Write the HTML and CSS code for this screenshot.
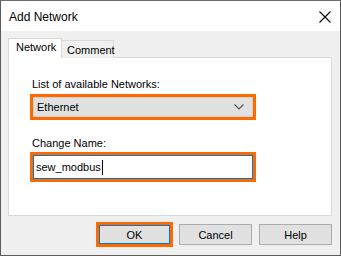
FILE: index.html
```html
<!DOCTYPE html>
<html>
<head>
<meta charset="utf-8">
<link rel="stylesheet" href="styles.css">
</head>
<body>
<div class="window">
  <div class="titlebar">
    <span class="title">Add Network</span>
    <svg class="close" width="12" height="12" viewBox="0 0 12 12"><path d="M0.5 0.5 L11.5 11.5 M11.5 0.5 L0.5 11.5" stroke="#000" stroke-width="1.1" fill="none"/></svg>
  </div>
  <div class="body">
    <div class="tabs">
      <div class="tab active">Network</div>
      <div class="tab">Comment</div>
    </div>
    <div class="panel">
      <div class="label">List of available Networks:</div>
      <div class="hl hl-select">
        <div class="select">
          <span>Ethernet</span>
          <svg width="10" height="6" viewBox="0 0 10 6"><path d="M0.5 0.5 L5 5 L9.5 0.5" stroke="#555" stroke-width="1.2" fill="none"/></svg>
        </div>
      </div>
      <div class="label label2">Change Name:</div>
      <div class="hl hl-input">
        <div class="input"><span>sew_modbus</span><span class="caret"></span></div>
      </div>
    </div>
    <div class="buttons">
      <div class="hl hl-btn"><div class="btn default">OK</div></div>
      <div class="btn">Cancel</div>
      <div class="btn">Help</div>
    </div>
  </div>
</div>
</body>
</html>
```

FILE: styles.css
```css
html, body {
  margin: 0;
  padding: 0;
}
body {
  width: 341px;
  height: 256px;
  overflow: hidden;
  font-family: "Liberation Sans", Arial, sans-serif;
  font-size: 11px;
  color: #000;
}
.window {
  box-sizing: border-box;
  width: 341px;
  height: 256px;
  border: 1px solid #5c5c5c;
  border-top-color: #6e6e6e;
  background: #f0f0f0;
  display: flex;
  flex-direction: column;
}
.titlebar {
  height: 30px;
  background: #fff;
  display: flex;
  align-items: center;
  justify-content: space-between;
  padding: 0 9px 0 8px;
  flex: none;
}
.title {
  font-size: 12px;
  position: relative;
  top: 1px;
}
.close {
  display: block;
  margin-top: 1px;
}
.body {
  padding: 7px 8px 0 7px;
  display: flex;
  flex-direction: column;
}
.tabs {
  display: flex;
  align-items: flex-end;
  height: 20px;
  position: relative;
  z-index: 1;
  margin-bottom: -1px;
}
.tab {
  box-sizing: border-box;
  height: 18px;
  padding: 0 4px 0 5px;
  border: 1px solid #d9d9d9;
  border-bottom: none;
  background: #f0f0f0;
  line-height: 18px;
}
.tab.active {
  height: 20px;
  width: 54px;
  background: #fff;
  padding: 0 0 0 7px;
  line-height: 17px;
}
.tab + .tab {
  border-left: none;
  width: 52px;
  padding: 0 0 0 5px;
}
.panel {
  box-sizing: border-box;
  height: 159px;
  background: #fff;
  border: 1px solid #d9d9d9;
  padding: 19px 0 0 21px;
  display: flex;
  flex-direction: column;
  align-items: flex-start;
}
.label {
  margin-left: 2px;
  line-height: 14px;
  height: 15px;
}
.label2 {
  margin-top: 16px;
}
.hl {
  border: 3px solid #ff6a00;
  box-sizing: border-box;
}
.hl-select {
  margin-top: 2px;
  width: 226px;
  height: 26px;
}
.select {
  box-sizing: border-box;
  height: 20px;
  background: #e1e1e1;
  border: 1px solid #cfcfcf;
  display: flex;
  align-items: center;
  justify-content: space-between;
  padding: 0 8px 0 3px;
}
.select svg {
  display: block;
}
.hl-input {
  margin-top: 1px;
  width: 226px;
  height: 30px;
}
.input {
  box-sizing: border-box;
  height: 24px;
  background: #fff;
  border: 1px solid #0078d7;
  display: flex;
  align-items: center;
  padding: 0 0 0 2px;
}
.caret {
  display: inline-block;
  width: 1px;
  height: 15px;
  background: #000;
  margin-left: 1px;
}
.buttons {
  display: flex;
  justify-content: flex-end;
  align-items: center;
  gap: 7px;
  margin-top: 6px;
}
.btn {
  box-sizing: border-box;
  width: 73px;
  height: 21px;
  background: #e1e1e1;
  border: 1px solid #adadad;
  display: flex;
  align-items: center;
  justify-content: center;
}
.hl-btn {
  width: 77px;
  height: 25px;
  margin-right: -1px;
}
.btn.default {
  width: 71px;
  height: 19px;
  border-color: #0078d7;
}
```
